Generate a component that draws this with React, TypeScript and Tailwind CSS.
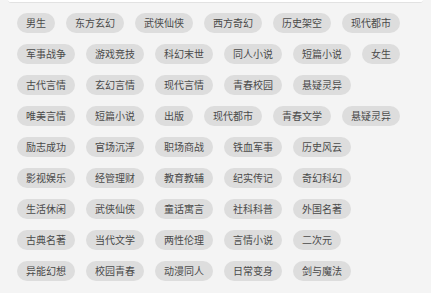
import React from "react";

const rows: string[][] = [
  ["男生", "东方玄幻", "武侠仙侠", "西方奇幻", "历史架空", "现代都市"],
  ["军事战争", "游戏竞技", "科幻末世", "同人小说", "短篇小说", "女生"],
  ["古代言情", "玄幻言情", "现代言情", "青春校园", "悬疑灵异"],
  ["唯美言情", "短篇小说", "出版", "现代都市", "青春文学", "悬疑灵异"],
  ["励志成功", "官场沉浮", "职场商战", "铁血军事", "历史风云"],
  ["影视娱乐", "经管理财", "教育教辅", "纪实传记", "奇幻科幻"],
  ["生活休闲", "武侠仙侠", "童话寓言", "社科科普", "外国名著"],
  ["古典名著", "当代文学", "两性伦理", "言情小说", "二次元"],
  ["异能幻想", "校园青春", "动漫同人", "日常变身", "剑与魔法"],
];

export default function App() {
  return (
    <div
      className="w-[431px] h-[293px] bg-[#f4f4f4] overflow-hidden relative"
      style={{ fontFamily: '"Noto Sans CJK SC", "Noto Sans", sans-serif' }}
    >
      <div className="mx-[8px] h-[3px] bg-white border-b border-[#e2e2e2] rounded-b-[4px]" />
      <div className="flex flex-col gap-[11px] pl-[17px] pt-[10px]">
        {rows.map((row, i) => (
          <div key={i} className="flex gap-[11px]">
            {row.map((t, j) => (
              <span
                key={j}
                className="h-[20px] px-[9px] rounded-full bg-[#dddddd] text-[#4a4a4a] text-[10px] leading-[20px] whitespace-nowrap"
              >
                {t}
              </span>
            ))}
          </div>
        ))}
      </div>
    </div>
  );
}
